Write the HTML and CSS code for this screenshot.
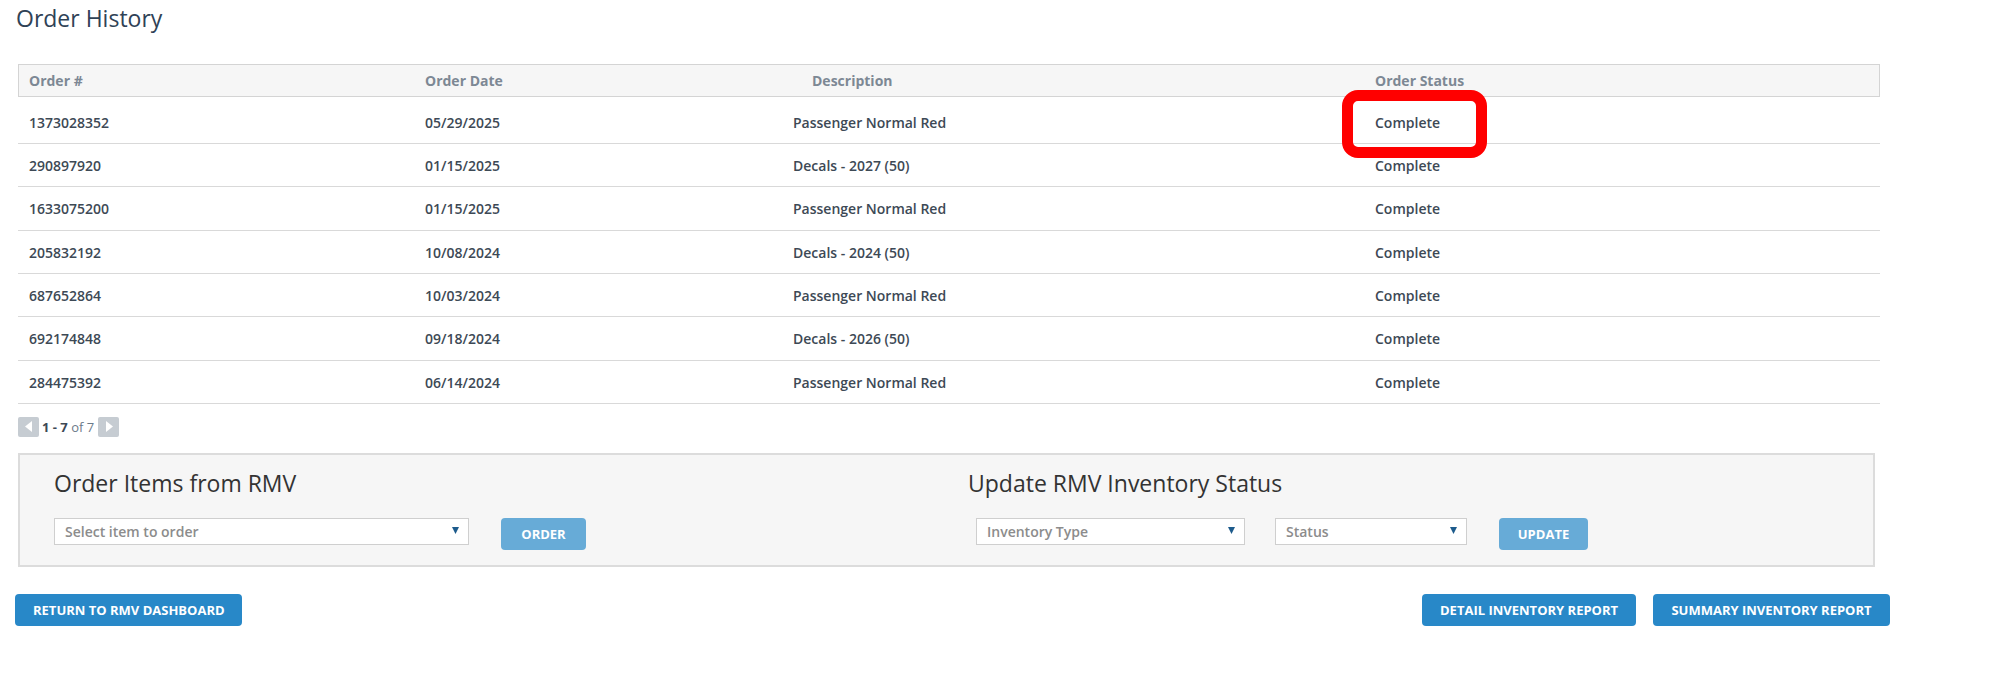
FILE: index.html
```html
<!DOCTYPE html>
<html lang="en">
<head>
<meta charset="utf-8">
<title>Order History</title>
<link rel="stylesheet" href="styles.css">
</head>
<body>
<div class="page">
  <h1 class="title">Order History</h1>

  <div class="orders">
    <div class="row head">
      <div class="cell">Order #</div>
      <div class="cell">Order Date</div>
      <div class="cell desc-head">Description</div>
      <div class="cell">Order Status</div>
    </div>
    <div class="row first">
      <div class="cell">1373028352</div>
      <div class="cell">05/29/2025</div>
      <div class="cell">Passenger Normal Red</div>
      <div class="cell status">Complete<span class="highlight"></span></div>
    </div>
    <div class="row">
      <div class="cell">290897920</div>
      <div class="cell">01/15/2025</div>
      <div class="cell">Decals - 2027 (50)</div>
      <div class="cell">Complete</div>
    </div>
    <div class="row">
      <div class="cell">1633075200</div>
      <div class="cell">01/15/2025</div>
      <div class="cell">Passenger Normal Red</div>
      <div class="cell">Complete</div>
    </div>
    <div class="row">
      <div class="cell">205832192</div>
      <div class="cell">10/08/2024</div>
      <div class="cell">Decals - 2024 (50)</div>
      <div class="cell">Complete</div>
    </div>
    <div class="row">
      <div class="cell">687652864</div>
      <div class="cell">10/03/2024</div>
      <div class="cell">Passenger Normal Red</div>
      <div class="cell">Complete</div>
    </div>
    <div class="row">
      <div class="cell">692174848</div>
      <div class="cell">09/18/2024</div>
      <div class="cell">Decals - 2026 (50)</div>
      <div class="cell">Complete</div>
    </div>
    <div class="row">
      <div class="cell">284475392</div>
      <div class="cell">06/14/2024</div>
      <div class="cell">Passenger Normal Red</div>
      <div class="cell">Complete</div>
    </div>
  </div>

  <div class="pager">
    <span class="pg-btn"><svg width="8" height="11" viewBox="0 0 8 11"><path d="M7 0 L0 5.5 L7 11 Z" fill="#fff"/></svg></span>
    <span class="pg-text"><b>1 - 7</b> of 7</span>
    <span class="pg-btn"><svg width="8" height="11" viewBox="0 0 8 11"><path d="M1 0 L8 5.5 L1 11 Z" fill="#fff"/></svg></span>
  </div>

  <div class="panel">
    <div class="panel-col left">
      <h2 class="panel-title">Order Items from RMV</h2>
      <div class="controls">
        <div class="select item-select"><span>Select item to order</span><svg class="caret" width="7" height="7" viewBox="0 0 7 7"><path d="M0 0 H7 L3.5 7 Z" fill="#1d5b8c"/></svg></div>
        <button class="btn light order-btn">ORDER</button>
      </div>
    </div>
    <div class="panel-col right">
      <h2 class="panel-title">Update RMV Inventory Status</h2>
      <div class="controls inv">
        <div class="select type-select"><span>Inventory Type</span><svg class="caret" width="7" height="7" viewBox="0 0 7 7"><path d="M0 0 H7 L3.5 7 Z" fill="#1d5b8c"/></svg></div>
        <div class="select status-select"><span>Status</span><svg class="caret" width="7" height="7" viewBox="0 0 7 7"><path d="M0 0 H7 L3.5 7 Z" fill="#1d5b8c"/></svg></div>
        <button class="btn light update-btn">UPDATE</button>
      </div>
    </div>
  </div>

  <div class="actions">
    <button class="btn">RETURN TO RMV DASHBOARD</button>
    <div class="reports">
      <button class="btn">DETAIL INVENTORY REPORT</button>
      <button class="btn">SUMMARY INVENTORY REPORT</button>
    </div>
  </div>
</div>
</body>
</html>
```

FILE: styles.css
```css
* { box-sizing: border-box; }

html, body {
  margin: 0;
  padding: 0;
  background: #ffffff;
}

body {
  font-family: "Open Sans", "Noto Sans", "Liberation Sans", sans-serif;
  color: #3d4955;
}

.page {
  width: 2000px;
  padding: 2px 0 0 18px;
}

.title {
  margin: 0 0 0 -2px;
  font-size: 23px;
  line-height: 32px;
  font-weight: 400;
  color: #2f4256;
}

/* ---------- table ---------- */
.orders {
  margin-top: 30px;
  width: 1862px;
}

.row {
  display: grid;
  grid-template-columns: 396px 368px 582px 1fr;
  align-items: center;
  height: 43.33px;
  border-bottom: 1px solid #d9d9d9;
  padding-top: 1px;
  font-size: 14px;
  font-weight: 600;
}

.row.head {
  height: 33px;
  padding-top: 0;
  background: #f6f6f6;
  border: 1px solid #d4d4d4;
  color: #7d8894;
  font-weight: 700;
}

.row.first {
  height: 47px;
  padding-top: 5px;
}

.cell {
  padding-left: 11px;
  white-space: nowrap;
}

.row.head .cell { padding-left: 10px; }
.row.head .desc-head { padding-left: 29px; }

.status { position: relative; }

.highlight {
  position: absolute;
  left: -22px;
  top: -23px;
  width: 145px;
  height: 68px;
  border: 11px solid #ff0000;
  border-radius: 16px;
  pointer-events: none;
}

/* ---------- pager ---------- */
.pager {
  margin-top: 13px;
  display: flex;
  align-items: center;
  height: 20px;
}

.pg-btn {
  width: 21px;
  height: 20px;
  background: #c6ccd2;
  border-radius: 2px;
  display: flex;
  align-items: center;
  justify-content: center;
}

.pg-text {
  font-size: 13px;
  color: #6b7a8a;
  padding: 0 3px 0 3px;
  width: 59px;
  white-space: nowrap;
}

.pg-text b {
  color: #3d4955;
  font-weight: 700;
}

/* ---------- panel ---------- */
.panel {
  margin-top: 16px;
  width: 1857px;
  height: 114px;
  background: #f6f6f6;
  border: 2px solid #dcdcdc;
  display: flex;
  padding: 12px 0 0 34px;
}

.panel-col.left { width: 914px; }

.panel-title {
  margin: 0;
  font-size: 23px;
  line-height: 32px;
  font-weight: 400;
  color: #333333;
}

.controls {
  margin-top: 19px;
  display: flex;
  align-items: flex-start;
}

.controls.inv { margin-left: 8px; }

.select {
  height: 27px;
  background: #ffffff;
  border: 1px solid #cfcfcf;
  display: flex;
  align-items: center;
  justify-content: space-between;
  padding: 0 9px 0 10px;
  font-size: 14px;
  font-weight: 600;
  color: #8c8c8c;
}

.caret { margin-top: -2px; }

.item-select { width: 415px; }
.type-select { width: 269px; }
.status-select { width: 192px; margin-left: 30px; }

.btn {
  font-family: "Open Sans", "Noto Sans", "Liberation Sans", sans-serif;
  font-size: 13px;
  font-weight: 700;
  color: #ffffff;
  background: #2888c8;
  border: 0;
  border-radius: 4px;
  height: 32px;
  padding: 0 18px;
  white-space: nowrap;
}

.btn.light { background: #67abd7; }

.order-btn { width: 85px; margin-left: 32px; padding: 0; }
.update-btn { width: 89px; margin-left: 32px; padding: 0; }

/* ---------- actions ---------- */
.actions {
  margin: 27px 0 0 -3px;
  width: 1875px;
  display: flex;
  justify-content: space-between;
}

.actions > .btn { width: 227px; }

.reports {
  display: flex;
  gap: 17px;
}

.reports .btn:first-child { width: 214px; }
.reports .btn:last-child { width: 237px; }
```
